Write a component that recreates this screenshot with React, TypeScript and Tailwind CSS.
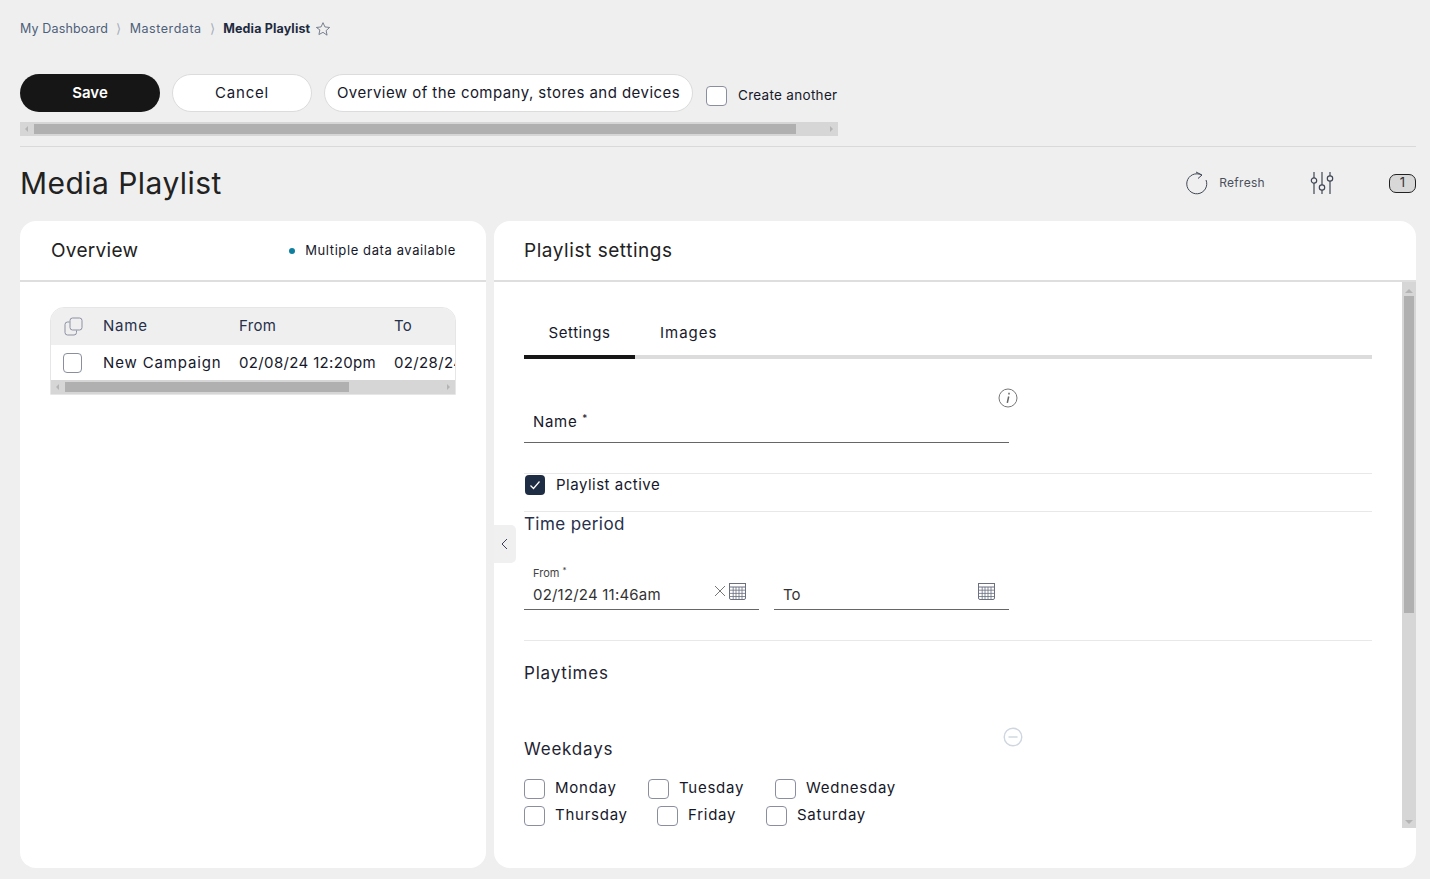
import React from "react";

const Box = ({ className = "" }: { className?: string }) => (
  <span className={`block shrink-0 h-[20px] rounded-[4px] border border-[#8a8fa0] bg-white ${className}`} />
);

const Calendar = () => (
  <svg width="17" height="17" viewBox="0 0 17 17" fill="none" className="shrink-0">
    <rect x="0.5" y="0.5" width="16" height="16" rx="1.5" fill="#fff" stroke="#6b7080" />
    <rect x="0.5" y="0.5" width="16" height="3.5" fill="#fff" stroke="#6b7080" />
    <path d="M1 7.2H16M1 10.4H16M1 13.5H16M4.2 4V16.5M7 4V16.5M10 4V16.5M13 4V16.5" stroke="#6a6f80" strokeWidth="0.8" />
  </svg>
);

const HBar = ({ thumbClass, bar }: { thumbClass: string; bar: string }) => (
  <div className={`flex items-center justify-between h-[14px] bg-[#d6d6d6] ${bar}`}>
    <span className="w-0 h-0 ml-[5px] border-y-[3px] border-y-transparent border-r-[3px] border-r-[#b4b4b4]" />
    <span className={`h-[10px] bg-[#b0b0b0] ${thumbClass}`} />
    <span className="w-0 h-0 mr-[5px] border-y-[3px] border-y-transparent border-l-[3px] border-l-[#b4b4b4]" />
  </div>
);

const Day = ({ label, w }: { label: string; w: string }) => (
  <div className={`flex items-center gap-[10px] ${w}`}>
    <Box className="w-[21px]" />
    <span className="text-[15px] tracking-[0.75px] text-[#16182a]">{label}</span>
  </div>
);

const Sep = () => <span className="w-[21.5px] text-center text-[#a4adba]">⟩</span>;

export default function App() {
  return (
    <div
      className="h-[879px] w-[1430px] overflow-hidden bg-[#efefef] pl-5 pr-[14px] text-[#16182a]"
      style={{ fontFamily: "Inter, 'Liberation Sans', sans-serif" }}
    >
      {/* breadcrumb */}
      <div className="flex items-center h-[20px] pt-[19px] box-content text-[12.5px] text-[#4e5f7a] tracking-[0.15px]">
        <span>My Dashboard</span>
        <Sep />
        <span className="tracking-[0.55px]">Masterdata</span>
        <Sep />
        <span className="font-bold text-[#1e2a3e]">Media Playlist</span>
        <svg width="16" height="16" viewBox="0 0 24 24" fill="none" stroke="#5a6478" strokeWidth="1.2" className="ml-[5px]">
          <path d="M12 2.5l2.9 6.4 7 .8-5.2 4.7 1.4 6.9L12 17l-6.1 3.3 1.4-6.9L2.1 9.7l7-.8z" />
        </svg>
      </div>

      {/* toolbar */}
      <div className="flex items-center mt-[35px] h-[38px]">
        <button className="w-[140px] h-[38px] rounded-full bg-[#161616] text-white font-semibold text-[15px]">Save</button>
        <button className="ml-[12px] w-[140px] h-[38px] rounded-full bg-white border border-[#dcdcdc] text-[15px] tracking-[0.8px]">Cancel</button>
        <button className="ml-[12px] w-[369px] h-[38px] rounded-full bg-white border border-[#dcdcdc] text-[15px] whitespace-nowrap tracking-[0.45px]">
          Overview of the company, stores and devices
        </button>
        <div className="ml-[13px] mt-[5px] flex items-center gap-[11px]">
          <Box className="bg-transparent w-[21px]" />
          <span className="text-[13.5px] tracking-[0.3px]">Create another</span>
        </div>
      </div>

      <HBar bar="mt-[10px] w-[818px]" thumbClass="w-[762px] ml-[6px] mr-auto" />
      <div className="mt-[10px] h-px bg-[#d9d9d9] w-[1396px]" />

      {/* title row */}
      <div className="flex items-center h-[74px] pb-[2px]">
        <h1 className="text-[30px] tracking-[0.45px] text-[#222] font-normal">Media Playlist</h1>
        <div className="ml-auto flex items-center text-[#4a4f5c]">
          <svg width="22" height="24" viewBox="0 0 22 24" fill="none" stroke="#3f4655" strokeWidth="1">
            <path d="M15.5 4A10 10 0 1 0 20 9" />
            <path d="M10 1l6 3-4 3.5" />
          </svg>
          <span className="ml-[11px] text-[12px] tracking-[0.3px]">Refresh</span>
          <svg width="24" height="24" viewBox="0 0 24 24" fill="none" stroke="#3f4655" strokeWidth="1.2" className="ml-[45px]">
            <path d="M4 1v6M4 12v11M12 1v13M12 19v4M20 1v4M20 10v13" />
            <circle cx="4" cy="9.5" r="2.7" />
            <circle cx="12" cy="16.5" r="2.7" />
            <circle cx="20" cy="7.5" r="2.7" />
          </svg>
          <span className="ml-[55px] w-[27px] h-[19px] flex items-center justify-center rounded-[7px] border border-[#222] bg-[#d8d8d8] text-[13px] text-[#333]">1</span>
        </div>
      </div>

      {/* panels */}
      <div className="relative flex gap-[8px] h-[647px]">
        <section className="w-[466px] bg-white rounded-[16px] overflow-hidden">
          <header className="flex items-center justify-between h-[61px] pt-[2px] pl-[31px] pr-[30px] border-b-2 border-[#dedede]">
            <h2 className="text-[19px] tracking-[0.3px] text-[#222]">Overview</h2>
            <div className="flex items-center -mt-[2px] text-[13px] tracking-[0.6px]">
              <span className="w-[6px] h-[6px] rounded-full bg-[#0f7f9f] mr-[10px]" />
              Multiple data available
            </div>
          </header>
          <div className="mx-[30px] mt-[25px] rounded-t-[14px] overflow-hidden border border-[#e6e6e6] text-[15px] tracking-[0.35px]">
            <div className="flex items-center h-[37px] bg-[#efefef] text-[#26304a]">
              <span className="w-[52px] pl-[13px]">
                <svg width="19" height="19" viewBox="0 0 19 19" fill="none" stroke="#8b8fa3" strokeWidth="1">
                  <rect x="6" y="1" width="12" height="12" rx="2.5" />
                  <path d="M5.5 5H3.5A2.5 2.5 0 0 0 1 7.5V15.5A2.5 2.5 0 0 0 3.5 18H10A2.5 2.5 0 0 0 12.5 15.5V13.5" />
                </svg>
              </span>
              <span className="w-[136px] tracking-[0.8px]">Name</span>
              <span className="w-[155px]">From</span>
              <span>To</span>
            </div>
            <div className="flex items-center h-[35px] pt-[1px] bg-white whitespace-nowrap overflow-hidden">
              <span className="w-[52px] shrink-0 pl-[12px]"><Box className="w-[19px] h-[19px]" /></span>
              <span className="w-[136px] shrink-0 tracking-[0.85px]">New Campaign</span>
              <span className="w-[155px] shrink-0">02/08/24 12:20pm</span>
              <span className="w-[61px] overflow-hidden">02/28/24</span>
            </div>
            <HBar bar="" thumbClass="w-[284px] ml-[6px] mr-auto" />
          </div>
        </section>

        <section className="flex-1 bg-white rounded-[16px] overflow-hidden flex flex-col">
          <header className="flex items-center h-[61px] pt-[2px] shrink-0 pl-[30px] border-b-2 border-[#dedede]">
            <h2 className="text-[19px] tracking-[0.55px] text-[#222]">Playlist settings</h2>
          </header>
          <div className="flex h-[546px]">
            <div className="flex-1 overflow-hidden pl-[30px] pr-[30px]">
              {/* tabs */}
              <div className="flex h-[77px] items-end border-b-4 border-[#dcdcdc] text-[15px] tracking-[0.55px]">
                <span className="w-[111px] h-[50px] -mb-[4px] flex items-start justify-center pt-[13px] border-b-4 border-[#161616]">Settings</span>
                <span className="ml-[25px] h-[46px] pt-[13px] tracking-[1px]">Images</span>
              </div>

              {/* name */}
              <div className="relative w-[485px] h-[84px] border-b border-[#666]">
                <span className="absolute left-[9px] top-[52px] text-[15px] tracking-[0.7px]">
                  Name <sup className="text-[10px]">*</sup>
                </span>
                <svg width="20" height="20" viewBox="0 0 20 20" fill="none" className="absolute right-[-9px] top-[29px]">
                  <circle cx="10" cy="10" r="9" stroke="#777" />
                  <path d="M11 4.8v1.6M10.7 8.5L9.3 14.8" stroke="#666" strokeWidth="1.5" />
                </svg>
              </div>

              {/* active */}
              <div className="mt-[30px] h-[39px] border-y border-[#e8e8e8] flex items-start pt-[1px] pl-[1px]">
                <span className="w-[20px] h-[20px] rounded-[4px] bg-[#1f2d44] flex items-center justify-center">
                  <svg width="12" height="12" viewBox="0 0 12 12" fill="none" stroke="#fff" strokeWidth="1.2">
                    <path d="M1.5 6.5l3 3L10.5 2.5" />
                  </svg>
                </span>
                <span className="ml-[11px] -mt-[1px] text-[15px] tracking-[0.5px]">Playlist active</span>
              </div>

              <h3 className="text-[17px] tracking-[0.4px] text-[#26304a]">Time period</h3>

              {/* dates */}
              <div className="flex gap-[15px] mt-[28px]">
                <div className="relative w-[235px] h-[44px] border-b border-[#666]">
                  <span className="absolute left-[9px] -top-[1px] text-[11px] text-[#444]">From <sup className="text-[8px]">*</sup></span>
                  <span className="absolute left-[9px] top-[18px] text-[15px] tracking-[0.2px] text-[#333]">02/12/24 11:46am</span>
                  <div className="absolute right-[13px] top-[17px] flex items-center gap-[2px]">
                    <svg width="14" height="14" viewBox="0 0 14 14" stroke="#777" strokeWidth="1"><path d="M2 2l10 10M12 2L2 12" /></svg>
                    <Calendar />
                  </div>
                </div>
                <div className="relative w-[235px] h-[44px] border-b border-[#666]">
                  <span className="absolute left-[9px] top-[18px] text-[15px] text-[#333]">To</span>
                  <div className="absolute right-[14px] top-[17px]"><Calendar /></div>
                </div>
              </div>

              <div className="mt-[30px] h-px bg-[#e8e8e8]" />
              <h3 className="mt-[20px] text-[17px] tracking-[0.8px] text-[#1f2433]">Playtimes</h3>

              {/* weekdays */}
              <div className="relative w-[500px] mt-[51px]">
                <h3 className="text-[17px] tracking-[0.8px] text-[#1f2433]">Weekdays</h3>
                <svg width="20" height="20" viewBox="0 0 20 20" fill="none" className="absolute left-[479px] top-[-10px]" stroke="#cfd6e0" strokeWidth="1.4">
                  <circle cx="10" cy="10" r="8.8" />
                  <path d="M5.5 10h9" />
                </svg>
              </div>
              <div className="mt-[16px] flex flex-col gap-[7px]">
                <div className="flex h-[20px]">
                  <Day label="Monday" w="w-[124px]" />
                  <Day label="Tuesday" w="w-[127px]" />
                  <Day label="Wednesday" w="w-[140px]" />
                </div>
                <div className="flex h-[20px]">
                  <Day label="Thursday" w="w-[133px]" />
                  <Day label="Friday" w="w-[109px]" />
                  <Day label="Saturday" w="w-[140px]" />
                </div>
              </div>
            </div>

            {/* vertical scrollbar */}
            <div className="w-[14px] shrink-0 bg-[#d6d6d6] flex flex-col items-center">
              <span className="mt-[7px] w-0 h-0 border-x-[4px] border-x-transparent border-b-[4px] border-b-[#b4b4b4]" />
              <span className="mt-[3px] w-[10px] h-[317px] bg-[#b0b0b0]" />
              <span className="mt-auto mb-[4px] w-0 h-0 border-x-[4px] border-x-transparent border-t-[4px] border-t-[#b4b4b4]" />
            </div>
          </div>
        </section>

        {/* collapse handle */}
        <div className="absolute left-[474px] top-[304px] w-[22px] h-[38px] rounded-r-[5px] bg-[#f0f0f0] flex items-center justify-center">
          <svg width="10" height="14" viewBox="0 0 10 14" fill="none" stroke="#3a4256" strokeWidth="1"><path d="M7 2L2 7l5 5" /></svg>
        </div>
      </div>
    </div>
  );
}
